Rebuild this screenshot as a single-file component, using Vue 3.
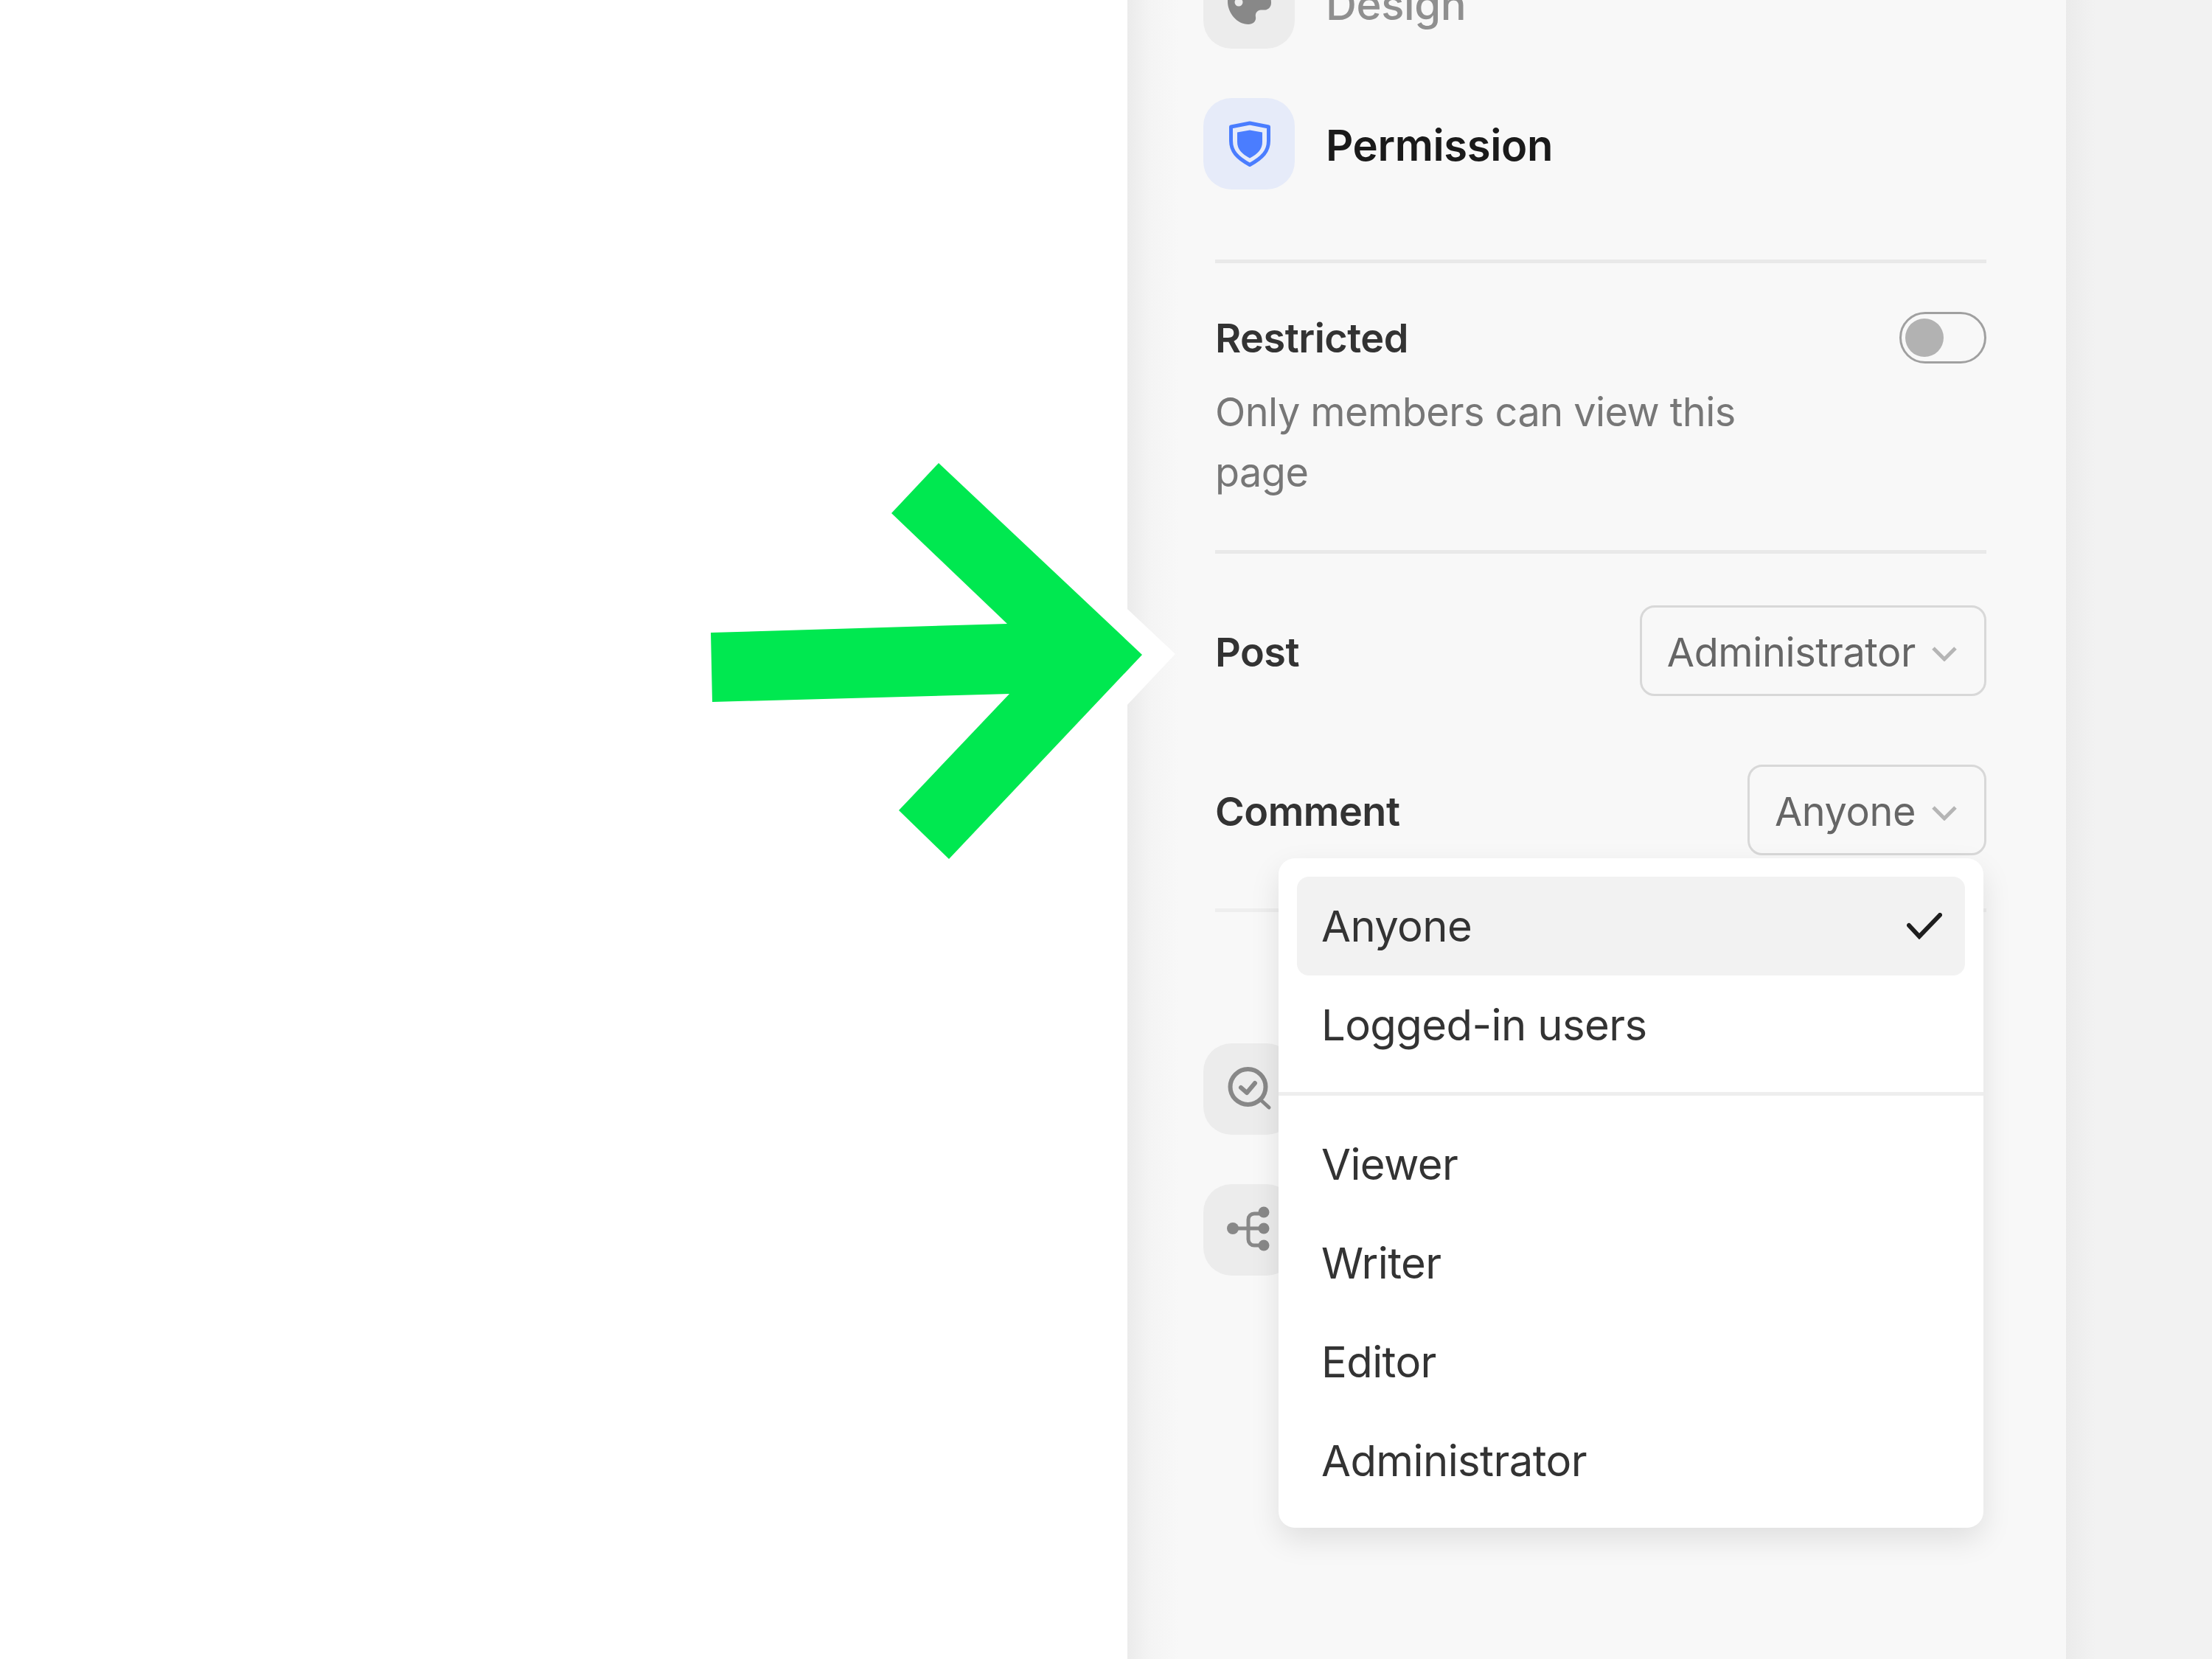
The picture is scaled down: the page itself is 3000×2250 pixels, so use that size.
<template>
  <div class="page">
    <div class="blank"></div>

    <aside class="panel">
      <div class="nav-row nav-row-muted">
        <span class="icon-box">
          <svg width="124" height="124" viewBox="0 0 124 124">
            <path fill="#888" d="M62 32C46 32 33 44 33 60c0 16 13 31 28 31 7 0 11-5 10-10-1-5 2-9 7-9.500h6c4-.5 8-4 8-9.500 0-18-14-30-30-30z" />
            <circle cx="48" cy="61" r="5.500" fill="#ececec" />
          </svg>
        </span>
        <span class="nav-label">Design</span>
      </div>
      <div class="nav-row">
        <span class="icon-box icon-box-on">
          <svg width="124" height="124" viewBox="0 0 124 124">
            <path fill="none" stroke="#4a7dff" stroke-width="5" stroke-linejoin="round" d="M63 34l25.500 5v19c0 14-8 23-25.500 32.500C45.500 81 37.500 72 37.500 58V39z" />
            <path fill="#4a7dff" d="M63 43.500l17 3v13c0 10-6 16-17 22-11-6-17-12-17-22v-13z" />
          </svg>
        </span>
        <span class="nav-label nav-label-on">Permission</span>
      </div>

      <div class="settings">
        <hr class="divider" />
        <div class="restricted">
          <div class="restricted-top">
            <span class="field-label">Restricted</span>
            <span class="toggle"><i></i></span>
          </div>
          <p class="restricted-desc">Only members can view this page</p>
        </div>
        <hr class="divider" />
        <div class="perm-rows">
          <div v-for="row in permRows" :key="row.label" class="perm-row">
            <span class="field-label">{{ row.label }}</span>
            <span class="select">
              {{ row.value }}
              <svg width="34" height="20" viewBox="0 0 34 20">
                <path fill="none" stroke="#b5b5b5" stroke-width="5" d="M2 2l15 15 15-15" />
              </svg>
            </span>
          </div>
        </div>
        <hr class="divider divider-last" />
      </div>

      <div class="nav-row nav-row-review">
        <span class="icon-box">
          <svg width="124" height="124" viewBox="0 0 124 124">
            <circle cx="60.500" cy="59" r="24" fill="none" stroke="#888" stroke-width="6" />
            <path fill="none" stroke="#888" stroke-width="5" stroke-linecap="round" d="M77 76l12 11" />
            <path fill="none" stroke="#888" stroke-width="6" stroke-linecap="round" stroke-linejoin="round" d="M51 60l8 7 11-13" />
          </svg>
        </span>
      </div>
      <div class="nav-row">
        <span class="icon-box">
          <svg width="124" height="124" viewBox="0 0 124 124">
            <circle cx="40" cy="60" r="8" fill="#888" />
            <circle cx="82" cy="38" r="7.500" fill="#888" />
            <circle cx="82" cy="60" r="7.500" fill="#888" />
            <circle cx="82" cy="83" r="7.500" fill="#888" />
            <path fill="none" stroke="#888" stroke-width="5" d="M40 60h42M82 40h-13a8 8 0 0 0-8 8v27a8 8 0 0 0 8 8h13" />
          </svg>
        </span>
      </div>

      <div class="menu">
        <template v-for="(group, i) in menuGroups" :key="i">
          <hr v-if="i > 0" class="menu-divider" />
          <div
            v-for="item in group"
            :key="item"
            class="menu-item"
            :class="{ 'menu-item-on': item === 'Anyone' }"
          >
            <span>{{ item }}</span>
            <svg v-if="item === 'Anyone'" width="48" height="36" viewBox="0 0 48 36">
              <path fill="none" stroke="#1e1e1e" stroke-width="6" stroke-linecap="round" d="M3 17l14 15 28-29" />
            </svg>
          </div>
        </template>
      </div>
    </aside>

    <div class="rest"></div>

    <!-- callout arrow laid over the screenshot -->
    <svg class="arrow" width="1700" height="1200" viewBox="0 0 1700 1200">
      <path fill="#fff" d="M1528 825l66 62-66 70z" />
      <path fill="#00e850" d="M1549 888L1273 628l-64 68 157 150-402 12 2 94 403-11-150 158 68 66z" />
    </svg>
  </div>
</template>

<script setup>
const permRows = [
  { label: 'Post', value: 'Administrator' },
  { label: 'Comment', value: 'Anyone' }
]

const menuGroups = [
  ['Anyone', 'Logged-in users'],
  ['Viewer', 'Writer', 'Editor', 'Administrator']
]
</script>

<style>
html,
body {
  margin: 0;
  background: #fff;
}
</style>

<style scoped>
.page {
  position: relative;
  display: flex;
  width: 3000px;
  height: 2250px;
  overflow: hidden;
  font-family: Inter, "Liberation Sans", sans-serif;
}
.blank {
  width: 1529px;
  background: #fff;
}
.panel {
  position: relative;
  width: 1273px;
  box-sizing: border-box;
  padding: 0 108px 0 103px;
  background: linear-gradient(90deg, #ebebeb 0, #f4f4f4 30px, #f8f8f8 70px);
}
.rest {
  flex: 1;
  background: linear-gradient(90deg, #ebebeb 0, #f2f2f2 40px);
}
.nav-row {
  display: flex;
  align-items: center;
  gap: 42px;
  height: 124px;
}
.nav-row-muted {
  margin-top: -58px;
  margin-bottom: 67px;
}
.nav-row-review {
  margin-bottom: 67px;
}
.icon-box {
  width: 124px;
  height: 124px;
  flex: none;
  border-radius: 38px;
  background: #ececec;
}
.icon-box svg {
  display: block;
}
.icon-box-on {
  background: #e6ebf9;
}
.nav-label {
  padding-top: 3px;
  font-size: 58px;
  font-weight: 500;
  letter-spacing: -0.4px;
  color: #8f8f8f;
}
.nav-label-on {
  font-weight: 600;
  color: #1a1a1a;
}
.settings {
  padding-left: 16px;
  padding-top: 95px;
  margin-bottom: 178px;
}
.divider {
  height: 5px;
  margin: 0;
  border: 0;
  background: #e9e9e9;
}
.restricted {
  padding: 66px 0 64px;
}
.restricted-top {
  display: flex;
  align-items: center;
  justify-content: space-between;
}
.field-label {
  font-size: 54px;
  font-weight: 560;
  letter-spacing: -0.5px;
  color: #333;
}
.perm-row .field-label {
  padding-top: 3px;
}
.toggle {
  display: flex;
  align-items: center;
  box-sizing: border-box;
  width: 118px;
  height: 70px;
  padding: 0 5px;
  border: 3px solid #a0a0a0;
  border-radius: 35px;
}
.toggle i {
  width: 52px;
  height: 52px;
  border-radius: 50%;
  background: #b2b2b2;
}
.restricted-desc {
  width: 760px;
  margin: 25px 0 0;
  font-size: 54px;
  line-height: 82px;
  letter-spacing: -0.55px;
  color: #777;
}
.perm-rows {
  display: flex;
  flex-direction: column;
  gap: 93px;
  padding-top: 70px;
}
.perm-row {
  display: flex;
  align-items: center;
  justify-content: space-between;
}
.select {
  display: flex;
  align-items: center;
  gap: 22px;
  box-sizing: border-box;
  height: 123px;
  padding: 3px 37px 0 34px;
  border: 3px solid #d8d8d8;
  border-radius: 20px;
  font-size: 54px;
  letter-spacing: -0.4px;
  color: #666;
}
.select svg {
  margin-top: 5px;
}
.divider-last {
  margin-top: 72px;
  background: #eee;
}
.menu {
  position: absolute;
  top: 1164px;
  left: 205px;
  width: 956px;
  box-sizing: border-box;
  padding: 25px 0 24px;
  border-radius: 22px;
  background: #fff;
  box-shadow: 0 16px 40px rgba(0, 0, 0, 0.1);
}
.menu-item {
  display: flex;
  align-items: center;
  justify-content: space-between;
  box-sizing: border-box;
  height: 134px;
  margin: 0 25px;
  padding: 0 31px 0 33px;
  border-radius: 16px;
  font-size: 58px;
  letter-spacing: -0.6px;
  color: #333;
}
.menu-item-on {
  background: #f2f2f2;
}
.menu-divider {
  height: 5px;
  margin: 24px 0 26px;
  border: 0;
  background: #eee;
}
.arrow {
  position: absolute;
  top: 0;
  left: 0;
  pointer-events: none;
}
</style>
